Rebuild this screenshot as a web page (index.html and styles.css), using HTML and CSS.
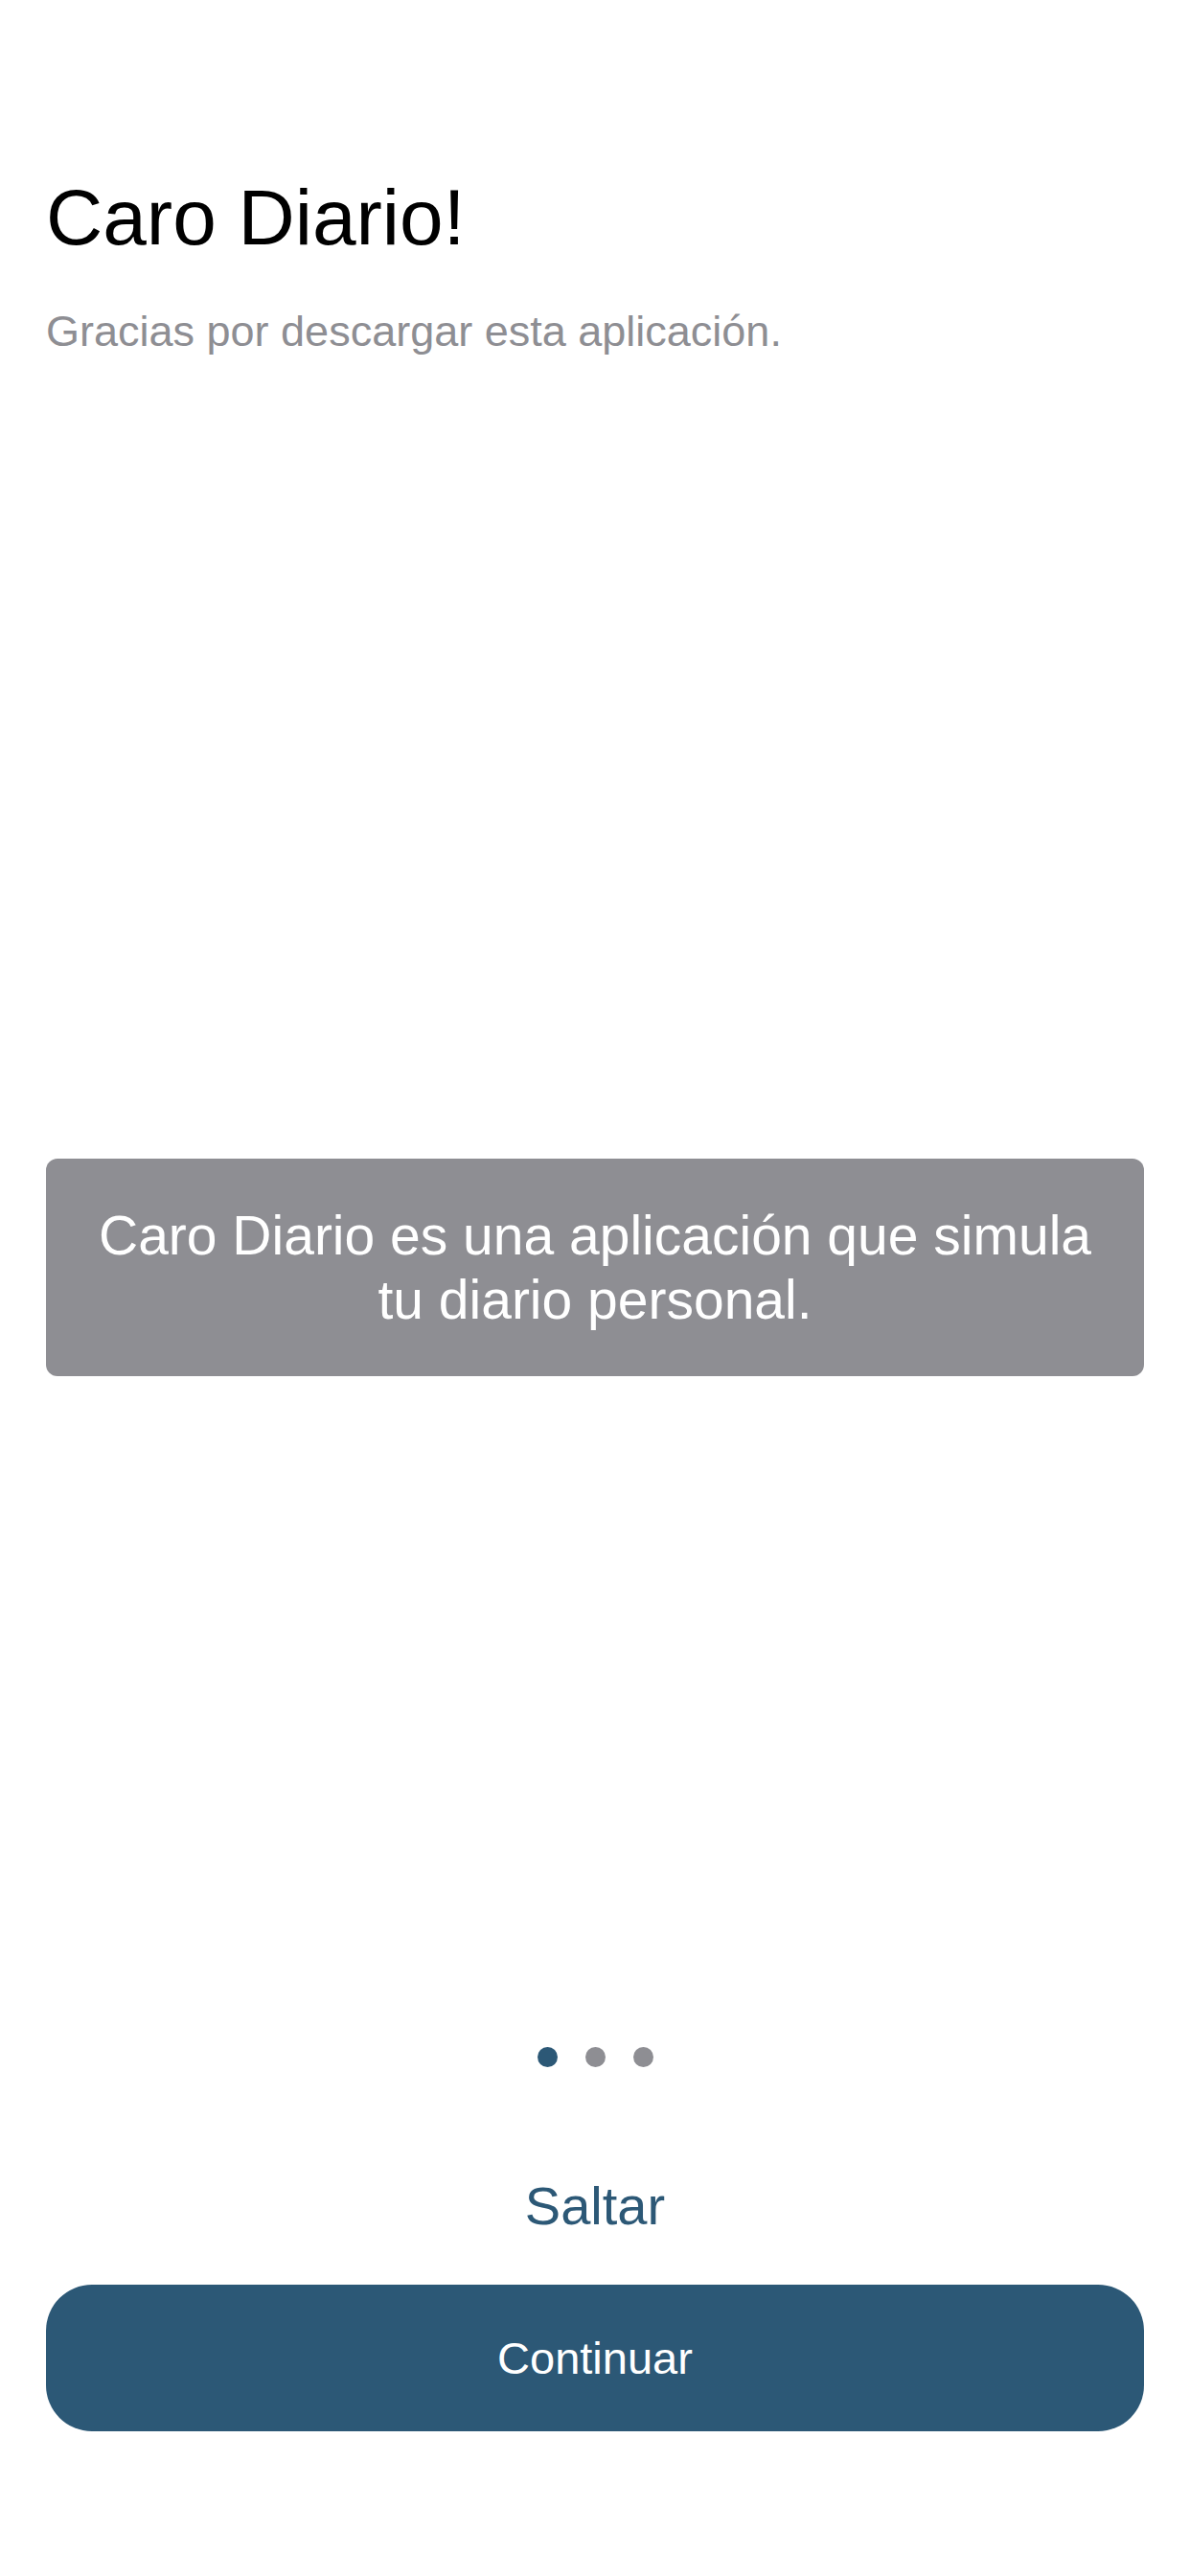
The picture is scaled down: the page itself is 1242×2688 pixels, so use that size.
FILE: index.html
```html
<!DOCTYPE html>
<html lang="es">
<head>
<meta charset="utf-8">
<title>Caro Diario</title>
<link rel="stylesheet" href="styles.css">
</head>
<body>
<main class="screen">
  <header class="intro">
    <h1 class="title">Caro Diario!</h1>
    <p class="subtitle">Gracias por descargar esta aplicación.</p>
  </header>
  <section class="card">
    <p class="card-text">Caro Diario es una aplicación que simula tu diario personal.</p>
  </section>
  <div class="dots">
    <span class="dot active"></span>
    <span class="dot"></span>
    <span class="dot"></span>
  </div>
  <button class="skip">Saltar</button>
  <button class="primary">Continuar</button>
</main>
</body>
</html>
```

FILE: styles.css
```css
* { box-sizing: border-box; }
html, body {
  margin: 0;
  padding: 0;
  background: #ffffff;
}
body {
  font-family: "Liberation Sans", Arial, Helvetica, sans-serif;
}
.screen {
  width: 1242px;
  height: 2688px;
  padding: 178px 48px 0;
  display: flex;
  flex-direction: column;
}
.intro {
  display: flex;
  flex-direction: column;
}
.title {
  margin: 0;
  font-size: 82px;
  line-height: 1.2;
  font-weight: 400;
  color: #000000;
}
.subtitle {
  margin: 43px 0 0;
  font-size: 45px;
  line-height: 1.2;
  color: #8e8e93;
}
.card {
  margin-top: 836px;
  height: 227px;
  background: #8e8e93;
  border-radius: 12px;
  display: flex;
  align-items: center;
  justify-content: center;
  padding: 0 40px;
}
.card-text {
  margin: 0;
  font-size: 57px;
  line-height: 67px;
  color: #ffffff;
  text-align: center;
}
.dots {
  margin-top: 700px;
  display: flex;
  justify-content: center;
  gap: 29px;
  height: 21px;
}
.dot {
  width: 21px;
  height: 21px;
  border-radius: 50%;
  background: #8e8e93;
}
.dot.active {
  background: #2c5876;
}
.skip {
  margin-top: 111px;
  align-self: center;
  background: none;
  border: 0;
  padding: 0;
  font-family: inherit;
  font-size: 56px;
  line-height: 1.2;
  color: #2c5876;
}
.primary {
  margin-top: 48px;
  height: 153px;
  width: 100%;
  border: 0;
  border-radius: 48px;
  background: #2c5876;
  color: #ffffff;
  font-family: inherit;
  font-size: 47px;
  display: flex;
  align-items: center;
  justify-content: center;
  padding: 0;
}
```
